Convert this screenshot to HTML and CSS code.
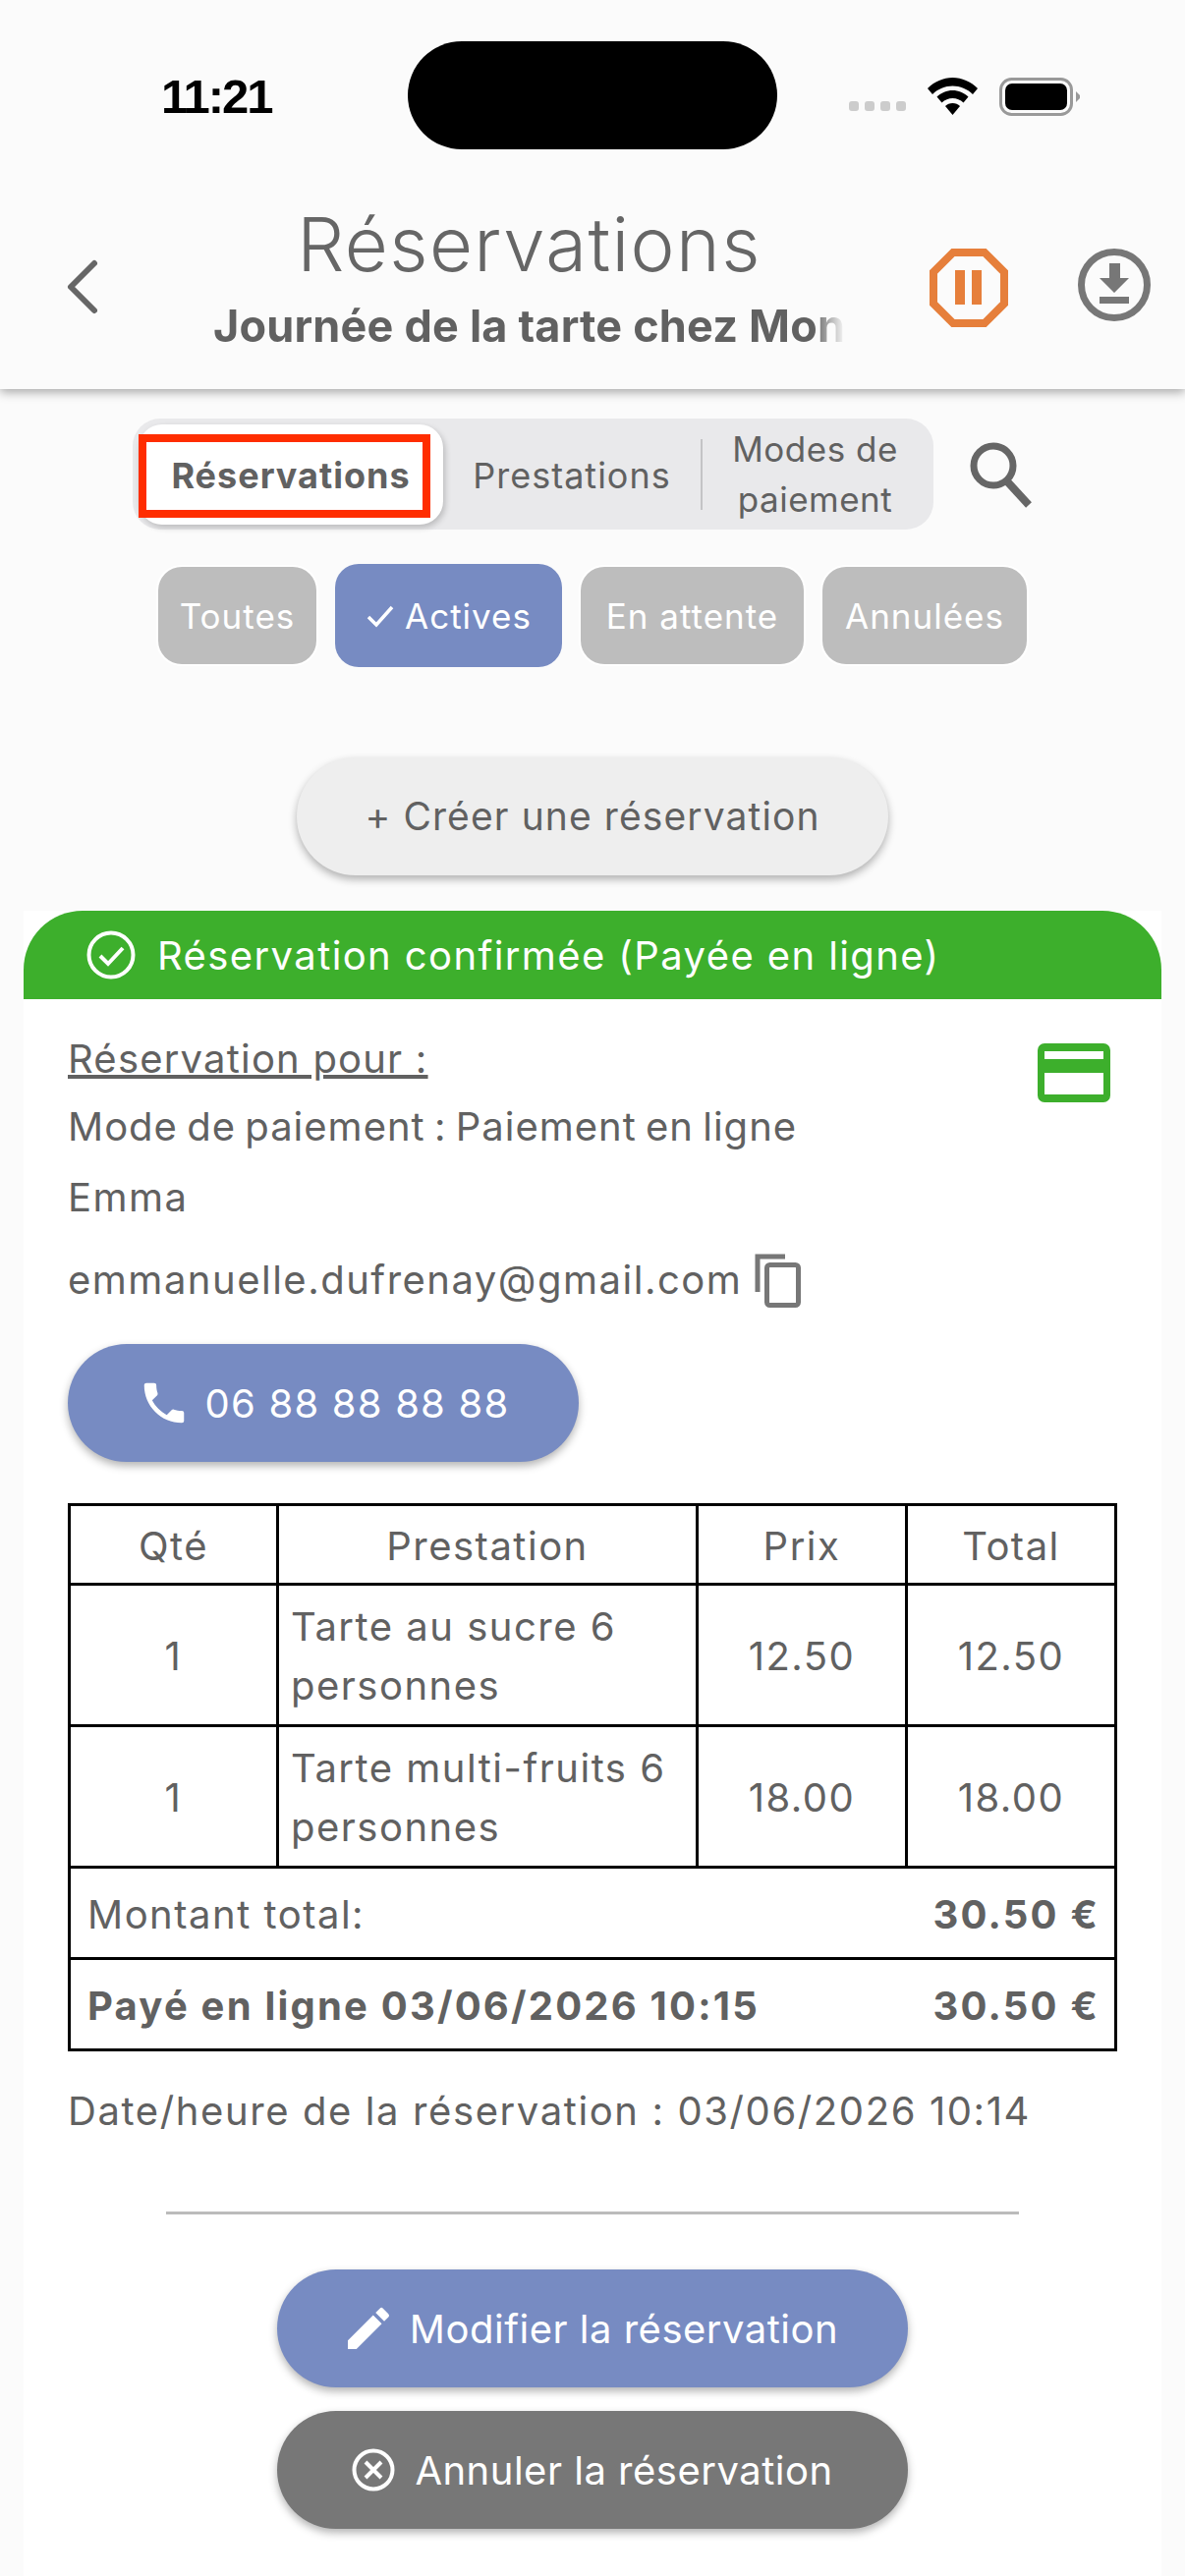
FILE: index.html
```html
<!DOCTYPE html>
<html>

<head>
  <title>Réservations</title>
  <link rel="stylesheet" href="styles.css">
</head>

<body>
  <div class="island"></div>

  <header class="topbar">
    <div class="status">
      <span class="clock">11:21</span>
      <div class="status-icons">
        <div class="signal"><i></i><i></i><i></i><i></i></div>
        <svg class="wifi" viewBox="0 0 51 38"><path d="M25.500 0C35 0 44 4 51 11l-5 6C40.500 11.500 33 8.500 25.500 8.500S10.500 11.500 5 17l-5-6C7 4 16 0 25.500 0z"/><path d="M25.500 13c6 0 11.500 2.500 16 6.500l-5 6c-3-3-7-4.500-11-4.500s-8 1.500-11 4.500l-5-6c4.500-4 10-6.500 16-6.500z"/><path d="M25.500 26c3 0 5.500 1 7.500 3L25.500 38 18 29c2-2 4.500-3 7.500-3z"/></svg>
        <svg class="battery" viewBox="0 0 82 39"><rect x="1.500" y="1.500" width="72" height="36" rx="11" fill="none" stroke="#999" stroke-width="3"/><rect x="6" y="6" width="63" height="27" rx="7"/><path d="M78 14l4 4v3l-4 4z" fill="#999"/></svg>
      </div>
    </div>
    <div class="appbar">
      <svg class="back" viewBox="0 0 36 60"><path d="M30 6L6 30l24 24" fill="none" stroke="#666" stroke-width="6" stroke-linecap="round" stroke-linejoin="round"/></svg>
      <div class="titles">
        <h1 class="title">Réservations</h1>
        <div class="subtitle">Journée de la tarte chez Mon</div>
      </div>
      <svg class="pause" viewBox="0 0 80 80"><path d="M24 4h32l20 20v32L56 76H24L4 56V24z" fill="none" stroke="#e67f3b" stroke-width="8"/><path d="M26 22h10v35H26zM43 22h10v35H43z" fill="#e67f3b"/></svg>
      <svg class="download" viewBox="0 0 74 74"><circle cx="37" cy="37" r="33.500" fill="none" stroke="#777" stroke-width="7"/><path d="M32 15h11v15h9L37 45 22 30h10zM22 49h30v7H22z" fill="#777"/></svg>
    </div>
  </header>

  <main class="content">
    <div class="tabs-row">
      <div class="tabs">
        <div class="tab tab-active">Réservations<span class="highlight"></span></div>
        <div class="tab tab-plain">Prestations</div>
        <div class="tab-sep"></div>
        <div class="tab tab-wrap">Modes de paiement</div>
      </div>
      <svg class="search" viewBox="0 0 66 70"><circle cx="26" cy="26" r="20" fill="none" stroke="#666" stroke-width="7"/><path d="M40 42l22 24" fill="none" stroke="#666" stroke-width="8"/></svg>
    </div>

    <div class="chips">
      <div class="chip chip-all">Toutes</div>
      <div class="chip chip-on"><svg viewBox="0 0 30 30"><path d="M3 16l8 8L27 6" fill="none" stroke="#fff" stroke-width="3.500"/></svg>Actives</div>
      <div class="chip chip-wait">En attente</div>
      <div class="chip chip-off">Annulées</div>
    </div>

    <div class="create-wrap">
      <div class="create">+ Créer une réservation</div>
    </div>

    <section class="card">
      <div class="card-head">
        <svg viewBox="0 0 50 50"><circle cx="25" cy="25" r="22.500" fill="none" stroke="#fff" stroke-width="4"/><path d="M14 26l8 8 15-16" fill="none" stroke="#fff" stroke-width="4"/></svg>
        Réservation confirmée (Payée en ligne)
      </div>
      <div class="card-body">
        <div class="who">
          <div class="line first"><u>Réservation pour :</u></div>
          <svg class="card-icon" viewBox="0 0 74 60"><path d="M7 0h60a7 7 0 0 1 7 7v46a7 7 0 0 1-7 7H7a7 7 0 0 1-7-7V7a7 7 0 0 1 7-7zm0 8v8h60V8zm0 22v22h60V30z" fill="#3daf2c" fill-rule="evenodd"/></svg>
        </div>
        <div class="line mode">Mode de paiement : Paiement en ligne</div>
        <div class="line">Emma</div>
        <div class="line email">emmanuelle.dufrenay@gmail.com
          <svg viewBox="0 0 48 56"><path d="M4 40V4h28" fill="none" stroke="#777" stroke-width="5"/><rect x="13.500" y="12.500" width="32" height="41" rx="3" fill="none" stroke="#777" stroke-width="5"/></svg>
        </div>

        <div class="pill pill-blue pill-phone">
          <svg viewBox="0 0 24 24"><path d="M6.600 10.800c1.400 2.800 3.800 5.100 6.600 6.600l2.200-2.200c.3-.3.700-.4 1-.2 1.100.4 2.300.6 3.600.6.600 0 1 .4 1 1V20c0 .6-.4 1-1 1C10.600 21 3 13.400 3 4c0-.6.500-1 1-1h3.500c.6 0 1 .4 1 1 0 1.300.2 2.500.6 3.600.1.300 0 .7-.2 1z" fill="#fff"/></svg>
          06 88 88 88 88
        </div>

        <table class="order">
          <colgroup>
            <col class="col-a"><col class="col-b"><col class="col-c"><col class="col-d">
          </colgroup>
          <tr class="row-head"><td>Qté</td><td>Prestation</td><td>Prix</td><td>Total</td></tr>
          <tr class="row-item"><td>1</td><td class="name">Tarte au sucre 6 personnes</td><td>12.50</td><td>12.50</td></tr>
          <tr class="row-item"><td>1</td><td class="name">Tarte multi-fruits 6 personnes</td><td>18.00</td><td>18.00</td></tr>
          <tr class="row-sum"><td colspan="3" class="lab">Montant total:</td><td class="amt">30.50 €</td></tr>
          <tr class="row-sum"><td colspan="3" class="lab strong">Payé en ligne 03/06/2026 10:15</td><td class="amt">30.50 €</td></tr>
        </table>

        <div class="line stamp">Date/heure de la réservation : 03/06/2026 10:14</div>
        <hr class="rule">

        <div class="actions">
          <div class="pill pill-blue pill-wide">
            <svg class="pencil" viewBox="0 0 24 24"><path d="M3 17.250V21h3.750L17.800 9.940l-3.750-3.750zM20.700 7.040a1 1 0 0 0 0-1.410l-2.340-2.340a1 1 0 0 0-1.410 0l-1.830 1.830 3.750 3.750z" fill="#fff"/></svg>
            Modifier la réservation
          </div>
          <div class="pill pill-grey pill-wide">
            <svg viewBox="0 0 44 44"><circle cx="22" cy="22" r="19.500" fill="none" stroke="#fff" stroke-width="4"/><path d="M14 14l16 16M30 14L14 30" stroke="#fff" stroke-width="4"/></svg>
            Annuler la réservation
          </div>
        </div>
      </div>
    </section>
  </main>
</body>

</html>
```

FILE: styles.css
```css
* {
  box-sizing: border-box;
}

html, body {
  margin: 0;
  height: 2622px;
  overflow: hidden;
}

body {
  position: relative;
  background: #fbfbfb;
  color: #616161;
  font: 40px Inter, "Noto Sans", sans-serif;
  letter-spacing: 1.5px;
}

.island {
  position: absolute;
  left: 415px;
  top: 42px;
  width: 376px;
  height: 110px;
  border-radius: 55px;
  background: #000;
}

.topbar {
  height: 396px;
  background: #fbfbfb;
  box-shadow: rgba(0, 0, 0, 0.35) 0 3px 10px;
}

.status {
  display: flex;
  justify-content: space-between;
  align-items: center;
  height: 196px;
  padding: 0 107px 0 164px;
}

.clock {
  color: #000;
  font: bold 49px "Liberation Sans", sans-serif;
  letter-spacing: -2px;
}

.status-icons {
  display: flex;
  align-items: center;
  gap: 22px;
}

.signal {
  display: flex;
  gap: 6px;
  margin-top: 20px;
}

.signal i {
  width: 10px;
  height: 10px;
  border-radius: 3px;
  background: #ccc;
}

.wifi {
  width: 51px;
  height: 38px;
}

.battery {
  width: 82px;
  height: 39px;
}

.appbar {
  display: flex;
  align-items: flex-start;
}

.back {
  width: 36px;
  height: 60px;
  margin: 66px 0 0 66px;
  flex: none;
}

.titles {
  width: 643px;
  margin-left: 115px;
  flex: none;
}

.title {
  margin: 6px 0 0;
  color: #666;
  font-size: 76px;
  font-weight: 300;
  letter-spacing: 1.4px;
  line-height: 92px;
  text-align: center;
}

.subtitle {
  margin-top: 13px;
  overflow: hidden;
  white-space: nowrap;
  color: #616161;
  font-size: 45px;
  font-weight: 700;
  letter-spacing: 0.2px;
  line-height: 50px;
  -webkit-mask-image: linear-gradient(to right, #000 95%, transparent);
  mask-image: linear-gradient(to right, #000 95%, transparent);
}

.pause {
  width: 80px;
  height: 80px;
  margin: 57px 0 0 86px;
  flex: none;
}

.download {
  width: 74px;
  height: 74px;
  margin: 57px 0 0 71px;
  flex: none;
}

.tabs-row {
  display: flex;
  align-items: center;
  padding: 30px 0 0 135px;
}

.tabs {
  display: flex;
  align-items: center;
  width: 815px;
  height: 113px;
  padding: 0 6px;
  border-radius: 28px;
  background: #e9e9eb;
  font-size: 36px;
  letter-spacing: 1px;
}

.tab {
  text-align: center;
  white-space: nowrap;
}

.tab-active {
  position: relative;
  width: 310px;
  height: 102px;
  border-radius: 24px;
  background: #fff;
  font-weight: 700;
  line-height: 104px;
  box-shadow: rgba(0, 0, 0, 0.2) 2px 3px 6px;
}

.highlight {
  position: absolute;
  left: 0;
  top: 10px;
  width: 297px;
  height: 85px;
  border: 8px solid #ff2d00;
}

.tab-plain {
  width: 262px;
  padding-top: 2px;
}

.tab-sep {
  width: 2px;
  height: 72px;
  background: #c4c4c6;
}

.tab-wrap {
  flex: 1;
  white-space: normal;
  font-size: 35px;
  letter-spacing: 0.5px;
  line-height: 51px;
  padding: 0 30px;
}

.search {
  width: 66px;
  height: 70px;
  margin-left: 35px;
}

.chips {
  display: flex;
  align-items: center;
  gap: 19px;
  margin: 35px 0 0 161px;
}

.chip {
  display: flex;
  align-items: center;
  justify-content: center;
  height: 99px;
  border-radius: 24px;
  background: #bdbdbd;
  color: #fff;
  font-size: 35px;
  letter-spacing: 1px;
  box-shadow: 0 0 0 2px #fff;
}

.chip-all { width: 161px; }
.chip-wait { width: 227px; }
.chip-off { width: 208px; }

.chip-on {
  width: 231px;
  height: 105px;
  background: #778bc2;
  box-shadow: none;
}

.chip-on svg {
  width: 30px;
  height: 30px;
  margin-right: 10px;
}

.create-wrap {
  display: flex;
  justify-content: center;
  margin-top: 92px;
}

.create {
  width: 602px;
  height: 120px;
  border-radius: 60px;
  background: #eeeeee;
  font-size: 39px;
  letter-spacing: 1.1px;
  line-height: 120px;
  text-align: center;
  box-shadow: rgba(0, 0, 0, 0.3) 0 4px 8px;
}

.card {
  margin: 36px 24px 0;
  height: 1700px;
  background: #fff;
}

.card-head {
  display: flex;
  align-items: center;
  gap: 22px;
  height: 90px;
  padding-left: 64px;
  border-radius: 60px 60px 0 0;
  background: #3daf2c;
  color: #fff;
  letter-spacing: 1.4px;
}

.card-head svg {
  width: 50px;
  height: 50px;
}

.card-body {
  padding: 30px 0 0 45px;
}

.who {
  display: flex;
  justify-content: space-between;
  height: 64px;
  padding-right: 52px;
}

.card-icon {
  width: 74px;
  height: 60px;
  margin-top: 15px;
}

.line {
  height: 72px;
  line-height: 72px;
}

.line.first {
  height: 64px;
  line-height: 62px;
  letter-spacing: 1.2px;
}

.line.mode {
  letter-spacing: 1px;
  word-spacing: -3px;
}

.email {
  display: flex;
  align-items: center;
  gap: 12px;
  height: 94px;
  margin-top: 1px;
}

.email svg {
  width: 48px;
  height: 56px;
}

.pill {
  display: flex;
  align-items: center;
  justify-content: center;
  height: 120px;
  border-radius: 60px;
  color: #fff;
  box-shadow: rgba(0, 0, 0, 0.3) 0 4px 8px;
}

.pill-blue {
  background: #778bc2;
}

.pill-grey {
  background: #777777;
}

.pill-phone {
  width: 520px;
  margin-top: 18px;
  gap: 15px;
  letter-spacing: 1.2px;
}

.pill-phone svg {
  width: 54px;
  height: 54px;
}

.pill-wide {
  width: 642px;
  gap: 20px;
  letter-spacing: 0.5px;
}

.pill-wide svg {
  width: 44px;
  height: 44px;
}

.pill-wide .pencil {
  width: 56px;
  height: 56px;
  margin: 0 -6px;
}

.order {
  width: 1065px;
  margin-top: 42px;
  border-collapse: collapse;
  border: 3px solid #000;
  table-layout: fixed;
  line-height: 60px;
}

.order td {
  padding: 3px 0 0;
  border: 3px solid #000;
  text-align: center;
}

.col-a { width: 212px; }
.col-b { width: 427px; }
.col-c { width: 213px; }
.col-d { width: 213px; }

.row-head { height: 81px; }
.row-item { height: 144px; }
.row-sum { height: 93px; }

.order td.name {
  padding: 3px 12px 0;
  text-align: left;
}

.order td.lab {
  padding-left: 17px;
  text-align: left;
  border-right: 0;
}

.order td.strong,
.order td.amt {
  font-weight: 700;
  letter-spacing: 2.2px;
}

.order td.amt {
  padding-right: 15px;
  text-align: right;
  border-left: 0;
  white-space: nowrap;
}

.stamp {
  margin-top: 25px;
  letter-spacing: 1.6px;
}

.rule {
  width: 868px;
  height: 3px;
  margin: 66px 0 0 100px;
  border: 0;
  background: #bbbbbb;
}

.actions {
  display: flex;
  flex-direction: column;
  align-items: center;
  gap: 24px;
  margin-top: 56px;
  width: 1068px;
}
```
